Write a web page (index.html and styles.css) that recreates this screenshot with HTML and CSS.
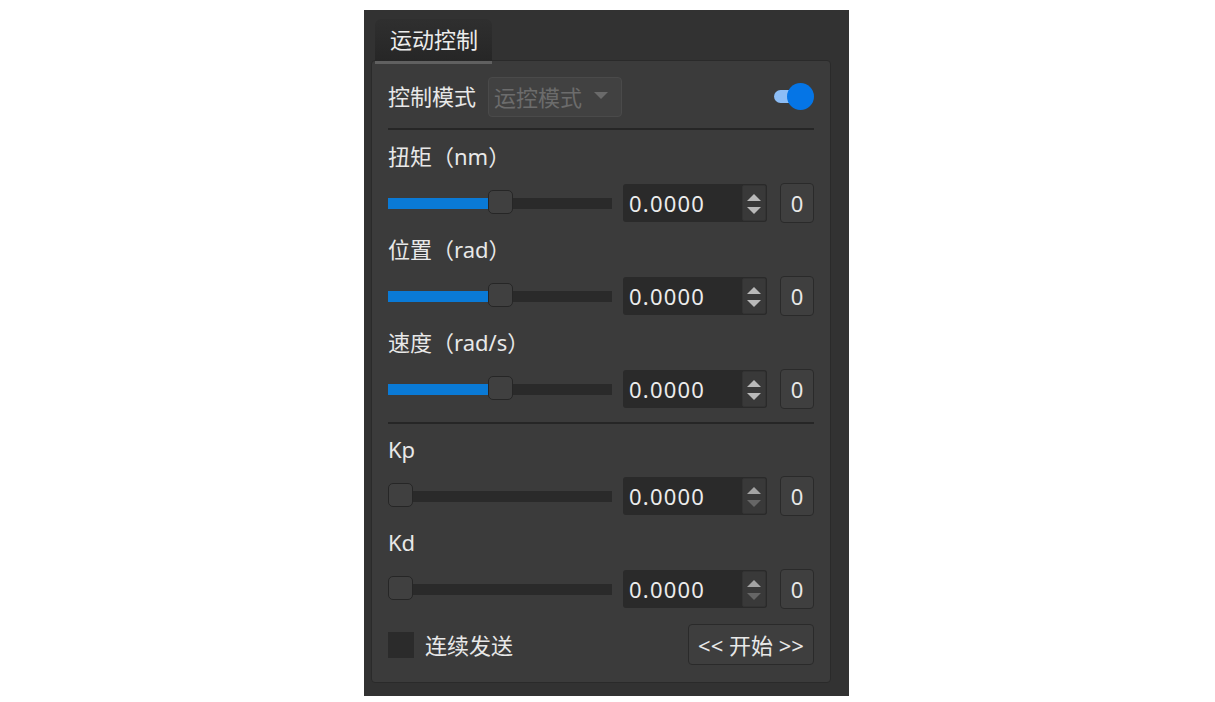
FILE: index.html
```html
<!DOCTYPE html>
<html lang="zh-CN">
<head>
<meta charset="utf-8">
<title>运动控制</title>
<link rel="stylesheet" href="styles.css">
</head>
<body>
<div class="frame">
  <div class="tab">运动控制</div>
  <div class="pane">
    <div class="mode-row">
      <span class="label">控制模式</span>
      <div class="combo">
        <span>运控模式</span>
        <svg class="combo-arrow" width="14" height="8" viewBox="0 0 14 8"><polygon points="0,0 14,0 7,7" fill="#6a6a6a"/></svg>
      </div>
      <div class="toggle"><div class="toggle-track"></div><div class="toggle-knob"></div></div>
    </div>
    <div class="sep sep-first"></div>

    <div class="group">
      <div class="glabel">扭矩（nm）</div>
      <div class="srow">
        <div class="slider" style="--v:0.5"><div class="track"><div class="fill"></div></div><div class="handle"></div></div>
        <div class="spin"><span class="val">0.0000</span><div class="arrows"><svg width="24" height="36" viewBox="0 0 24 36"><polygon points="5,16 12,9 19,16" class="on"/><polygon points="5,22 19,22 12,29" class="on"/></svg></div></div>
        <div class="zero">0</div>
      </div>
    </div>

    <div class="group">
      <div class="glabel">位置（rad）</div>
      <div class="srow">
        <div class="slider" style="--v:0.5"><div class="track"><div class="fill"></div></div><div class="handle"></div></div>
        <div class="spin"><span class="val">0.0000</span><div class="arrows"><svg width="24" height="36" viewBox="0 0 24 36"><polygon points="5,16 12,9 19,16" class="on"/><polygon points="5,22 19,22 12,29" class="on"/></svg></div></div>
        <div class="zero">0</div>
      </div>
    </div>

    <div class="group">
      <div class="glabel">速度（rad/s）</div>
      <div class="srow">
        <div class="slider" style="--v:0.5"><div class="track"><div class="fill"></div></div><div class="handle"></div></div>
        <div class="spin"><span class="val">0.0000</span><div class="arrows"><svg width="24" height="36" viewBox="0 0 24 36"><polygon points="5,16 12,9 19,16" class="on"/><polygon points="5,22 19,22 12,29" class="on"/></svg></div></div>
        <div class="zero">0</div>
      </div>
    </div>

    <div class="sep sep-second"></div>

    <div class="group">
      <div class="glabel">Kp</div>
      <div class="srow">
        <div class="slider" style="--v:0"><div class="track"><div class="fill"></div></div><div class="handle"></div></div>
        <div class="spin"><span class="val">0.0000</span><div class="arrows"><svg width="24" height="36" viewBox="0 0 24 36"><polygon points="5,16 12,9 19,16" class="up"/><polygon points="5,22 19,22 12,29" class="off"/></svg></div></div>
        <div class="zero">0</div>
      </div>
    </div>

    <div class="group">
      <div class="glabel">Kd</div>
      <div class="srow">
        <div class="slider" style="--v:0"><div class="track"><div class="fill"></div></div><div class="handle"></div></div>
        <div class="spin"><span class="val">0.0000</span><div class="arrows"><svg width="24" height="36" viewBox="0 0 24 36"><polygon points="5,16 12,9 19,16" class="up"/><polygon points="5,22 19,22 12,29" class="off"/></svg></div></div>
        <div class="zero">0</div>
      </div>
    </div>

    <div class="bottom-row">
      <div class="check"><div class="box"></div><span>连续发送</span></div>
      <div class="start">&lt;&lt; 开始 &gt;&gt;</div>
    </div>
  </div>
</div>
</body>
</html>
```
FILE: styles.css
```css
html, body {
  margin: 0;
  background: #ffffff;
}
body {
  font-family: "Noto Sans", "Noto Sans CJK SC", sans-serif;
  font-size: 22px;
  color: #e8e8e8;
}
.frame {
  margin: 10px 0 0 364px;
  width: 485px;
  height: 686px;
  box-sizing: border-box;
  background: #323232;
  padding-top: 9px;
}
.tab {
  position: relative;
  z-index: 1;
  margin-left: 11px;
  margin-bottom: -4px;
  width: 117px;
  height: 45px;
  box-sizing: border-box;
  padding-left: 15px;
  padding-bottom: 2px;
  display: flex;
  align-items: center;
  background: linear-gradient(#2f2f2f, #262626);
  border-radius: 6px 6px 0 0;
  border-bottom: 3px solid #606060;
  color: #ececec;
  line-height: 1;
}
.pane {
  margin-left: 7px;
  width: 460px;
  height: 623px;
  box-sizing: border-box;
  background: #3b3b3b;
  border: 1px solid #2a2a2a;
  border-radius: 4px;
  padding: 16px;
  display: flex;
  flex-direction: column;
}
.mode-row {
  height: 40px;
  display: flex;
  align-items: center;
}
.label {
  line-height: 1;
  margin-top: -2px;
}
.combo {
  margin-left: 12px;
  width: 134px;
  height: 40px;
  box-sizing: border-box;
  background: #414141;
  border: 1px solid #4a4a4a;
  border-radius: 4px;
  display: flex;
  align-items: center;
  padding-left: 5px;
  padding-bottom: 2px;
  color: #6c6c6c;
}
.combo-arrow {
  margin-left: 12px;
}
.toggle {
  margin-left: auto;
  position: relative;
  width: 40px;
  height: 28px;
}
.toggle-track {
  position: absolute;
  left: 0;
  top: 7px;
  width: 24px;
  height: 13px;
  border-radius: 7px;
  background: #8cbdf6;
}
.toggle-knob {
  position: absolute;
  right: 0;
  top: 0;
  width: 27px;
  height: 27px;
  border-radius: 50%;
  background: #0575e6;
}
.sep {
  height: 2px;
  background: #262626;
}
.sep-first {
  margin-top: 11px;
}
.sep-second {
  margin-top: 13px;
}
.group {
  margin-top: 13px;
}
.sep-second + .group {
  margin-top: 12px;
}
.glabel {
  height: 30px;
  line-height: 27px;
}
.srow {
  margin-top: 10px;
  height: 40px;
  display: flex;
  align-items: center;
}
.slider {
  position: relative;
  width: 224px;
  height: 26px;
}
.track {
  position: absolute;
  left: 0;
  right: 0;
  top: 8px;
  height: 11px;
  background: #2a2a2a;
}
.fill {
  height: 100%;
  width: calc(var(--v) * (100% - 25px) + 12px);
  background: #0a7ad6;
}
.handle {
  position: absolute;
  top: 0;
  left: calc(var(--v) * (100% - 25px));
  width: 25px;
  height: 24px;
  box-sizing: border-box;
  background: #404040;
  border: 1px solid #262626;
  border-radius: 5px;
}
.spin {
  margin-left: 11px;
  width: 144px;
  height: 38px;
  box-sizing: border-box;
  background: #2a2a2a;
  border-radius: 3px;
  display: flex;
  align-items: center;
  padding-left: 6px;
}
.val {
  flex: 1;
  letter-spacing: 1.2px;
  color: #ececec;
}
.arrows {
  width: 24px;
  height: 36px;
  margin-right: 1px;
  background: #393939;
  border: 1px solid #333333;
  box-sizing: border-box;
  border-radius: 2px;
}
.arrows svg {
  display: block;
  margin: -1px;
}
.arrows .on { fill: #b9b9b9; }
.arrows .up { fill: #a3a3a3; }
.arrows .off { fill: #666666; }
.zero {
  margin-left: 13px;
  width: 34px;
  height: 40px;
  box-sizing: border-box;
  background: #3f3f3f;
  border: 1px solid #2a2a2a;
  border-radius: 4px;
  display: flex;
  align-items: center;
  justify-content: center;
}
.bottom-row {
  margin-top: 15px;
  height: 41px;
  display: flex;
  align-items: center;
  justify-content: space-between;
}
.check {
  display: flex;
  align-items: center;
}
.check span {
  margin-top: -2px;
}
.box {
  width: 26px;
  height: 26px;
  background: #2b2b2b;
  margin-right: 11px;
}
.start {
  width: 126px;
  height: 41px;
  box-sizing: border-box;
  background: #3e3e3e;
  border: 1px solid #2a2a2a;
  border-radius: 4px;
  display: flex;
  align-items: center;
  justify-content: center;
  padding-bottom: 2px;
}
```
